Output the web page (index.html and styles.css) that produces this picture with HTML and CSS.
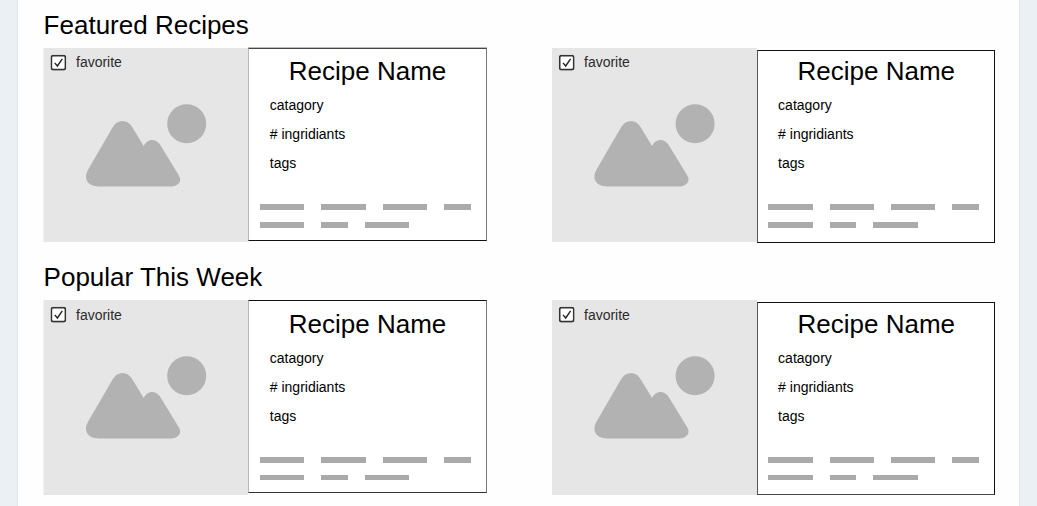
FILE: index.html
```html
<!DOCTYPE html>
<html lang="en">
<head>
<meta charset="utf-8">
<title>Recipes</title>
<link rel="stylesheet" href="styles.css">
</head>
<body>
<svg class="defs" width="0" height="0" aria-hidden="true">
  <symbol id="picture" viewBox="0 28 205 166">
    <path d="M44.3 122L69.1 79.3C74 71 84 71 88.7 79.3L100.1 98C103 91.5 110.8 89.3 116.4 96.5L135 127C139.200 133 134.500 138.400 127.500 138.400H55C44.500 138.400 39.500 131 44.300 122Z"/>
    <circle cx="143.100" cy="75.800" r="19.500"/>
  </symbol>
  <symbol id="check" viewBox="0 0 16 16">
    <rect x="1" y=".9" width="14" height="14" rx="1.800" fill="#fff" stroke="#333" stroke-width="1.600"/>
    <path d="M4.300 8.200L7 11.300L11.900 4.200" fill="none" stroke="#222" stroke-width="1.400"/>
  </symbol>
</svg>
<main class="page">
  <section class="section">
    <h2 class="heading">Featured Recipes</h2>
    <div class="cards">
      <article class="card card-left">
        <div class="photo">
          <div class="favorite"><svg class="check"><use href="#check"/></svg><span>favorite</span></div>
          <svg class="art"><use href="#picture"/></svg>
        </div>
        <div class="info">
          <h3 class="name">Recipe Name</h3>
          <ul class="facts"><li>catagory</li><li># ingridiants</li><li>tags</li></ul>
          <div class="bars"><i></i><i></i><i></i><i class="short"></i></div>
          <div class="bars"><i></i><i class="short"></i><i></i></div>
        </div>
      </article>
      <article class="card card-right">
        <div class="photo">
          <div class="favorite"><svg class="check"><use href="#check"/></svg><span>favorite</span></div>
          <svg class="art"><use href="#picture"/></svg>
        </div>
        <div class="info">
          <h3 class="name">Recipe Name</h3>
          <ul class="facts"><li>catagory</li><li># ingridiants</li><li>tags</li></ul>
          <div class="bars"><i></i><i></i><i></i><i class="short"></i></div>
          <div class="bars"><i></i><i class="short"></i><i></i></div>
        </div>
      </article>
    </div>
  </section>
  <section class="section popular">
    <h2 class="heading">Popular This Week</h2>
    <div class="cards">
      <article class="card card-left">
        <div class="photo">
          <div class="favorite"><svg class="check"><use href="#check"/></svg><span>favorite</span></div>
          <svg class="art"><use href="#picture"/></svg>
        </div>
        <div class="info">
          <h3 class="name">Recipe Name</h3>
          <ul class="facts"><li>catagory</li><li># ingridiants</li><li>tags</li></ul>
          <div class="bars"><i></i><i></i><i></i><i class="short"></i></div>
          <div class="bars"><i></i><i class="short"></i><i></i></div>
        </div>
      </article>
      <article class="card card-right">
        <div class="photo">
          <div class="favorite"><svg class="check"><use href="#check"/></svg><span>favorite</span></div>
          <svg class="art"><use href="#picture"/></svg>
        </div>
        <div class="info">
          <h3 class="name">Recipe Name</h3>
          <ul class="facts"><li>catagory</li><li># ingridiants</li><li>tags</li></ul>
          <div class="bars"><i></i><i></i><i></i><i class="short"></i></div>
          <div class="bars"><i></i><i class="short"></i><i></i></div>
        </div>
      </article>
    </div>
  </section>
</main>
</body>
</html>
```
FILE: styles.css
```css
* { box-sizing: border-box; }
body {
  margin: 0;
  background: #ebf0f4;
  color: #000;
  font: 14px/16px "Liberation Sans", Arial, sans-serif;
  overflow: hidden;
}
.defs { display: none; }
.page {
  height: 506px;
  margin: 0 18px;
  padding-left: 25px;
  background: #fefefe;
  border-left: 1px solid #fff;
  box-shadow: 0 0 0 1px #e2e6e9;
}
.section { height: 252px; padding-top: 10px; }
.heading, .name { margin: 0; font-size: 26px; line-height: 30px; font-weight: 400; white-space: nowrap; }
.heading { margin-left: -.4px; }
.cards { display: flex; gap: 65px; margin-top: 8px; }
.card { display: flex; align-items: flex-start; }
.photo { width: 205px; height: 194px; background: #e6e6e6; }
.card-left .photo { width: 204px; box-shadow: -1px 0 #f3f3f3; }
.favorite { display: flex; height: 28px; padding: 6px 0 0 7px; color: #2b2b2b; }
.check { width: 16px; height: 16px; flex: none; transform: translate(-.3px, .7px); }
.favorite span { margin-left: 9px; }
.art { display: block; width: 205px; height: 166px; fill: #b2b2b2; }
.card-left .art { transform: translateX(-.4px); }
.card-left .check { transform: translate(-.6px, .7px); }
.info {
  width: 238px;
  height: 193px;
  padding: 7px 0 0 11px;
  background: #fff;
  border: 1px solid #111;
}
.card-left .info { width: 239px; border-color: #444 #777 #111 #b8b8b8; box-shadow: 0 -1px #bbb; }
.card-right .info { margin-top: 2px; padding: 5px 0 0 10.300px; border-left-color: #555; }
.name { margin-left: 28.800px; }
.card-right .name { margin-left: 29.200px; }
.facts { list-style: none; margin: 5px 0 26px 9.800px; padding: 0; line-height: 29px; }
.bars { display: flex; gap: 17px; margin-bottom: 12px; }
.bars i { width: 44.300px; height: 6px; background: #aaa; }
.bars .short { width: 26.700px; }

.popular .photo { height: 195px; }
.popular .favorite span { padding-top: 1px; }
.popular .info { padding-top: 8px; }
.popular .card-right .info { padding-top: 6px; border-bottom-color: #444; }
.popular .card-left .info { border-top-color: #111; border-bottom-color: #333; box-shadow: none; }
.popular .bars + .bars i { height: 5px; }
```
